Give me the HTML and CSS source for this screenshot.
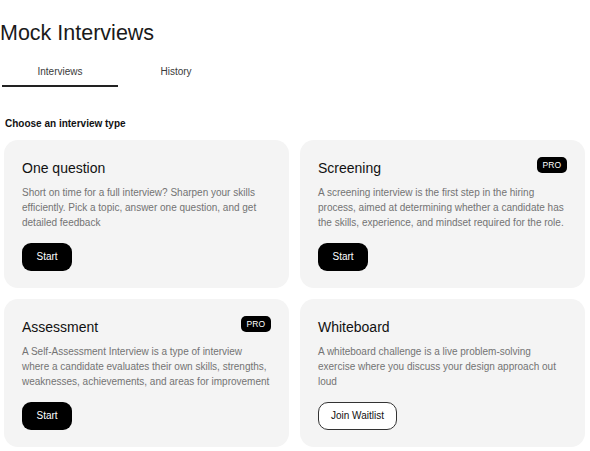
FILE: index.html
```html
<!DOCTYPE html>
<html lang="en">
<head>
    <meta charset="UTF-8">
    <meta name="viewport" content="width=device-width, initial-scale=1.0">
    <title>Mock Interviews</title>
    <link rel="stylesheet" href="styles.css">
</head>
<body>
    <h1>Mock Interviews</h1>
    <div class="tabs">
        <div class="tab active">Interviews</div>
        <div class="tab">History</div>
    </div>

    <div class="section">
        <h2>Choose an interview type</h2>
        <div class="grid">
            <div class="card">
                <div class="card-head">
                    <h3>One question</h3>
                </div>
                <p>Short on time for a full interview? Sharpen your skills efficiently. Pick a topic, answer one question, and get detailed feedback</p>
                <button class="btn">Start</button>
            </div>
            <div class="card">
                <div class="card-head">
                    <h3>Screening</h3>
                    <span class="pro">PRO</span>
                </div>
                <p>A screening interview is the first step in the hiring process, aimed at determining whether a candidate has the skills, experience, and mindset required for the role.</p>
                <button class="btn">Start</button>
            </div>
            <div class="card">
                <div class="card-head">
                    <h3>Assessment</h3>
                    <span class="pro">PRO</span>
                </div>
                <p>A Self-Assessment Interview is a type of interview where a candidate evaluates their own skills, strengths, weaknesses, achievements, and areas for improvement</p>
                <button class="btn">Start</button>
            </div>
            <div class="card">
                <div class="card-head">
                    <h3>Whiteboard</h3>
                </div>
                <p>A whiteboard challenge is a live problem-solving exercise where you discuss your design approach out loud</p>
                <button class="btn btn-outline">Join Waitlist</button>
            </div>
        </div>
    </div>
</body>
</html>
```

FILE: styles.css
```css
body {
    font-family: "Liberation Sans", Arial, sans-serif;
    margin: 0;
    background: #fff;
    color: #111;
}
h1 {
    margin: 21px 0 0;
    font-size: 21.5px;
    font-weight: 400;
    line-height: 25px;
    color: #1a1a1a;
}
.tabs {
    display: flex;
    margin-top: 12px;
    padding-left: 2px;
}
.tab {
    width: 116px;
    text-align: center;
    font-size: 10px;
    line-height: 12px;
    padding: 8px 0 7px;
    border-bottom: 2px solid transparent;
    color: #3a3a3a;
    cursor: pointer;
}
.tab.active {
    border-bottom-color: #222;
}
.section {
    padding: 0 5px 0 4px;
}
h2 {
    margin: 31px 0 10px 1px;
    font-size: 10px;
    line-height: 12px;
    font-weight: 700;
    color: #111;
}
.grid {
    display: grid;
    grid-template-columns: 1fr 1fr;
    gap: 11px;
}
.card {
    background-color: #f4f4f4;
    border-radius: 14px;
    padding: 17px 18px 17px;
}
.card-head {
    display: flex;
    justify-content: space-between;
    align-items: flex-start;
}
h3 {
    margin: 0;
    font-size: 14px;
    line-height: 22px;
    font-weight: 400;
    color: #111;
}
.pro {
    background: #000;
    color: #fff;
    font-size: 8.5px;
    line-height: 16px;
    height: 16px;
    padding: 0 6px;
    border-radius: 5px;
}
.card p {
    margin: 6px 0 13px;
    font-size: 10px;
    line-height: 15px;
    color: #737373;
}
.btn {
    display: block;
    font-family: inherit;
    font-size: 10px;
    line-height: 12px;
    height: 28px;
    padding: 0 14.5px;
    border: none;
    border-radius: 9px;
    background: #000;
    color: #fff;
    cursor: pointer;
}
.btn-outline {
    background: #fff;
    color: #111;
    border: 1px solid #333;
    border-radius: 10px;
    padding: 0 12px;
    height: 28px;
    font-weight: 500;
}
```
